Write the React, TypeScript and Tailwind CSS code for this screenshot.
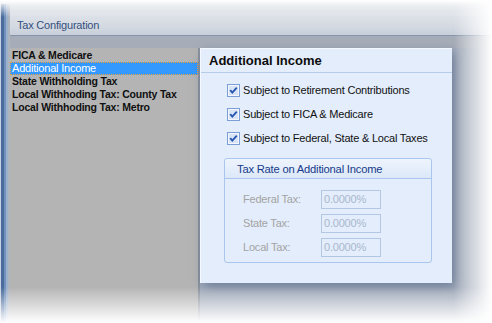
const sections = [
  'FICA & Medicare',
  'Additional Income',
  'State Withholding Tax',
  'Local Withhoding Tax: County Tax',
  'Local Withhoding Tax: Metro',
];

const options = [
  'Subject to Retirement Contributions',
  'Subject to FICA & Medicare',
  'Subject to Federal, State & Local Taxes',
];

const rates = [
  { label: 'Federal Tax:', value: '0.0000%' },
  { label: 'State Tax:', value: '0.0000%' },
  { label: 'Local Tax:', value: '0.0000%' },
];

// caixa marcada no estilo antigo do Windows
function CheckBox() {
  return (
    <svg width="13" height="13" viewBox="0 0 13 13" className="shrink-0">
      <rect x="0.5" y="0.5" width="12" height="12" fill="#f2f6fd" stroke="#7b9ed6" />
      <rect x="2" y="2" width="9" height="9" fill="#d9e5f7" />
      <path d="M3.2 6.2 L5.3 8.6 L9.8 3.6" stroke="#2857b0" strokeWidth="1.9" fill="none" />
    </svg>
  );
}

export default function App() {
  const selected = 1;

  return (
    <div className="relative w-[492px] h-[323px] overflow-hidden bg-white font-['Liberation_Sans',Arial,sans-serif] text-[11px] tracking-[-0.2px]">
      <div className="flex h-full pt-[4px] bg-[#c6ccd6]">
        {/* borda esquerda da janela */}
        <div className="w-[10px] shrink-0 bg-[linear-gradient(90deg,#c6d2e2_0_1px,#4a6c9c_1px_4px,#7091bc_4px_6px,#9cb1cc_6px_8px,#aeb4be_8px_10px)]" />

        <div className="flex-1 flex flex-col">
          <div className="h-[32px] flex items-end pb-[3px] pl-[7px] border-b border-[#8494ad] bg-[linear-gradient(180deg,#c3c9d3_0%,#dde1e8_35%,#d5dae2_70%,#c8cfda_100%)]">
            <span className="leading-[14px] text-[#34507e]">Tax Configuration</span>
          </div>
          <div className="h-[12px] bg-[#a7adb8]" />

          <div className="flex-1 flex">
            <div className="w-[188px] shrink-0 bg-[#b4b4b4] pt-[1px]">
              {sections.map((s, i) =>
                i === selected ? (
                  <div
                    key={s}
                    className="h-[13px] leading-[11px] pl-[1px] bg-[#3399ff] border border-dotted border-[#f2a13c] text-white text-[11px] whitespace-nowrap"
                  >
                    {s}
                  </div>
                ) : (
                  <div key={s} className="h-[13px] leading-[13px] pl-[2px] font-bold text-[10.5px] text-[#101010] whitespace-nowrap">
                    {s}
                  </div>
                )
              )}
            </div>
            <div className="w-[2px] bg-[#8c939e]" />

            <div className="flex-1 bg-[#a3acbb]">
              <div className="w-[252px] h-[235px] bg-[#e3edfb] border-l border-t border-[#f4f8ff] shadow-[3px_4px_10px_rgba(70,90,125,0.55)]">
                <div className="h-[24px] flex items-center pl-[8px] border-b border-[#b6cbe8]">
                  <span className="font-bold text-[13px] tracking-normal text-[#0c0c0c]">Additional Income</span>
                </div>

                <div className="pt-[5px] pl-[26px]">
                  {options.map((o) => (
                    <div key={o} className="h-[24px] flex items-center gap-[3px]">
                      <CheckBox />
                      <span className="text-[#111]">{o}</span>
                    </div>
                  ))}
                </div>

                <div className="mt-[8px] ml-[23px] w-[208px] h-[105px] border border-[#a9c6ee] rounded-[3px]">
                  <div className="h-[20px] flex items-center pt-[1px] pl-[12px] border-b border-[#a9c6ee] bg-[linear-gradient(180deg,#eef4fd,#dce8f9)] rounded-t-[3px]">
                    <span className="text-[#163a8a] text-[11.2px]">Tax Rate on Additional Income</span>
                  </div>
                  <div className="pt-[11px] pl-[18px] flex flex-col gap-[5px]">
                    {rates.map((r) => (
                      <div key={r.label} className="h-[19px] flex items-center">
                        <span className="w-[78px] text-[#a3a3a3]">{r.label}</span>
                        <div className="w-[60px] h-[19px] border border-[#b3c7e2] flex items-center pl-[2px] text-[#a9b7cd]">
                          {r.value}
                        </div>
                      </div>
                    ))}
                  </div>
                </div>
              </div>
            </div>
          </div>
        </div>
      </div>

      {/* esmaecimento nas bordas da captura */}
      <div className="pointer-events-none absolute inset-x-0 top-0 h-[17px] bg-gradient-to-b from-white to-transparent" />
      <div className="pointer-events-none absolute inset-y-0 right-0 w-[38px] bg-gradient-to-r from-transparent to-white" />
      <div className="pointer-events-none absolute inset-x-0 bottom-0 h-[36px] bg-gradient-to-b from-transparent to-white" />
    </div>
  );
}
